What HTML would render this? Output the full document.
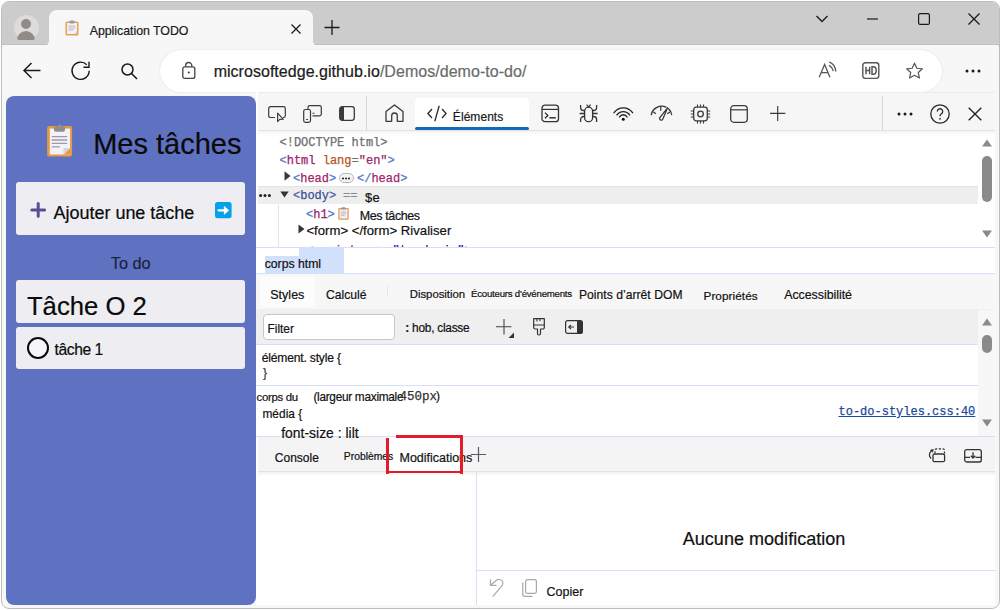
<!DOCTYPE html>
<html><head><meta charset="utf-8">
<style>
*{box-sizing:border-box;margin:0;padding:0}
html,body{width:1000px;height:610px;overflow:hidden;background:#ffffff;font-family:"Liberation Sans",sans-serif;color:#000}
.a{position:absolute}
svg{position:absolute;overflow:visible}
.t{position:absolute;white-space:nowrap;line-height:1;-webkit-text-stroke:0.2px currentColor}
#win{position:absolute;left:1px;top:1px;width:999px;height:608px;border:1px solid #bdbdbd;border-radius:8px;background:#f7f7f7;overflow:hidden}
</style></head><body>
<div id="win">
  <!-- tab strip -->
  <div class="a" style="left:0;top:0;width:998px;height:43.5px;background:#cccccc"></div>
</div>
<!-- active tab -->
<div class="a" style="left:2px;top:44.3px;width:996px;height:1.2px;background:#c0c0c0"></div>
<div class="a" style="left:49px;top:10px;width:264px;height:36px;background:#f7f7f7;border-radius:8px 8px 0 0"></div>
<div class="a" style="left:43px;top:40.5px;width:6px;height:6px;background:radial-gradient(circle at 0 0, transparent 5.5px, #f7f7f7 6px)"></div>
<div class="a" style="left:313px;top:40.5px;width:6px;height:6px;background:radial-gradient(circle at 100% 0, transparent 5.5px, #f7f7f7 6px)"></div>
<!-- toolbar -->
<div class="a" style="left:2px;top:45px;width:996px;height:47px;background:#f7f7f7"></div>
<!-- address bar -->
<div class="a" style="left:159.5px;top:50px;width:782.5px;height:41.5px;background:#ffffff;border-radius:21px;box-shadow:0 0 2px rgba(0,0,0,0.13)"></div>
<div class="t" style="left:213.63px;top:64.00px;font-size:16.00px;letter-spacing:0.036px;color:#1a1a1a">microsoftedge.github.io<span style="color:#6b6b6b">/Demos/demo-to-do/</span></div>
<div class="t" style="left:89.68px;top:25.00px;font-size:12.38px;letter-spacing:-0.033px;color:#1a1a1a">Application TODO</div>


<!-- avatar -->
<div class="a" style="left:14px;top:15px;width:25px;height:25px;border-radius:50%;background:#dedcda"></div>
<div class="a" style="left:21px;top:19px;width:10px;height:10px;border-radius:50%;background:#8f8b88"></div>
<div class="a" style="left:17px;top:31px;width:18px;height:9px;border-radius:9px 9px 3px 3px;background:#8f8b88;clip-path:ellipse(50% 100% at 50% 100%)"></div>
<!-- tab favicon -->
<svg style="left:65px;top:20px" width="14" height="16" viewBox="0 0 14 16">
 <rect x="0.5" y="1.5" width="13" height="14" rx="1.5" fill="#e8a04c"/>
 <rect x="2" y="3" width="10" height="11" fill="#f4f1f8"/>
 <path d="M9 14 L12 11 L12 14 Z" fill="#d8d2e0"/>
 <rect x="4.5" y="0.5" width="5" height="3" rx="1" fill="#9a9a9a"/>
 <path d="M3.5 6h7M3.5 8h7M3.5 10h5" stroke="#a8a8b8" stroke-width="0.8"/>
</svg>
<!-- tab close -->
<svg style="left:291px;top:24px" width="10" height="10" viewBox="0 0 10 10"><path d="M0.5 0.5L9.5 9.5M9.5 0.5L0.5 9.5" stroke="#1a1a1a" stroke-width="1.3"/></svg>
<!-- new tab plus -->
<svg style="left:324px;top:20px" width="16" height="16" viewBox="0 0 16 16"><path d="M8 0V15M0.5 7.5H15.5" stroke="#1a1a1a" stroke-width="1.3"/></svg>
<!-- window controls -->
<svg style="left:816px;top:15px" width="12" height="8" viewBox="0 0 12 8"><path d="M0.5 1L6 6.5L11.5 1" stroke="#1a1a1a" stroke-width="1.3" fill="none"/></svg>
<svg style="left:867px;top:18px" width="12" height="2" viewBox="0 0 12 2"><path d="M0 1H11" stroke="#1a1a1a" stroke-width="1.2"/></svg>
<svg style="left:918px;top:13px" width="12" height="12" viewBox="0 0 12 12"><rect x="0.6" y="0.6" width="10.8" height="10.8" rx="1.5" stroke="#1a1a1a" stroke-width="1.2" fill="none"/></svg>
<svg style="left:968px;top:13px" width="12" height="12" viewBox="0 0 12 12"><path d="M0.5 0.5L11.5 11.5M11.5 0.5L0.5 11.5" stroke="#1a1a1a" stroke-width="1.3"/></svg>
<!-- nav icons -->
<svg style="left:23px;top:62px" width="18" height="17" viewBox="0 0 18 17"><path d="M17.5 8.5H1.2M8.5 1L1 8.5L8.5 16" stroke="#1a1a1a" stroke-width="1.5" fill="none"/></svg>
<svg style="left:71px;top:61px" width="20" height="20" viewBox="0 0 20 20"><path d="M18.2 9.8A8.6 8.6 0 1 1 15.7 3.7" stroke="#1a1a1a" stroke-width="1.4" fill="none"/><path d="M12.5 6.3H18V0.8" stroke="#1a1a1a" stroke-width="1.4" fill="none"/></svg>
<svg style="left:121px;top:63px" width="17" height="17" viewBox="0 0 17 17"><circle cx="6.5" cy="6.5" r="5.5" stroke="#1a1a1a" stroke-width="1.5" fill="none"/><path d="M10.5 10.5L16 16" stroke="#1a1a1a" stroke-width="1.6"/></svg>
<!-- lock -->
<svg style="left:182px;top:62px" width="14" height="18" viewBox="0 0 14 18"><path d="M3.6 4.8V3.6A3.1 3.1 0 0 1 9.8 3.6V4.8" stroke="#444" stroke-width="1.3" fill="none"/><rect x="0.8" y="4.8" width="12" height="11.6" rx="2" stroke="#444" stroke-width="1.3" fill="none"/><circle cx="6.8" cy="10.6" r="1" fill="#333"/></svg>
<!-- right toolbar icons -->
<svg style="left:818px;top:61px" width="20" height="18" viewBox="0 0 20 18"><path d="M1.2 16.2L6.6 3.4L11.9 16.2M3.2 11.6H10" stroke="#555" stroke-width="1.25" fill="none"/><path d="M11.6 1.2Q16.8 3.2 17.8 10M11.3 4.6Q14.3 6 15.1 9.6" stroke="#555" stroke-width="1.25" fill="none" stroke-linecap="round"/></svg>
<svg style="left:862px;top:62px" width="18" height="17" viewBox="0 0 18 17"><rect x="0.8" y="0.8" width="16" height="15.6" rx="2.6" stroke="#555" stroke-width="1.4" fill="none"/><path d="M4 4.8V12.2M7.6 4.8V12.2M4 8.4H7.6M10 4.8V12.2H11.4A2.8 3.7 0 0 0 11.4 4.8Z" stroke="#555" stroke-width="1.5" fill="none"/></svg>
<svg style="left:905px;top:62px" width="19" height="18" viewBox="0 0 19 19"><path d="M9.5 1.2L12 6.6L17.8 7.2L13.5 11.1L14.7 16.9L9.5 14L4.3 16.9L5.5 11.1L1.2 7.2L7 6.6Z" stroke="#555" stroke-width="1.3" fill="none" stroke-linejoin="round"/></svg>
<svg style="left:965px;top:69px" width="16" height="4" viewBox="0 0 16 4"><circle cx="2" cy="2" r="1.5" fill="#1a1a1a"/><circle cx="8" cy="2" r="1.5" fill="#1a1a1a"/><circle cx="14" cy="2" r="1.5" fill="#1a1a1a"/></svg>

<!-- page -->
<div class="a" style="left:6px;top:96px;width:250px;height:509px;background:#5f72c1;border-radius:8px"></div>


<!-- todo content -->
<svg style="left:46px;top:124px" width="27" height="33" viewBox="0 0 27 33">
 <rect x="1.1" y="1.9" width="25" height="30.6" rx="2" fill="#e59a40"/>
 <rect x="3.8" y="4.6" width="20.3" height="25.9" fill="#f4f1f8"/>
 <path d="M17.5 30.5L24.1 23.9V30.5Z" fill="#e59a40"/>
 <path d="M17.5 30.5V23.9H24.1Z" fill="#d5d0e3"/>
 <rect x="8" y="2.2" width="11" height="5.6" rx="1.8" fill="#8e8e8e"/>
 <circle cx="13.5" cy="2" r="1.7" fill="#8e8e8e"/><circle cx="13.5" cy="2.2" r="0.7" fill="#e59a40"/>
 <path d="M5.7 12.7H21.2M5.7 16H21.2M5.7 19.3H21.2M5.7 22.9H13.8" stroke="#9c9ca4" stroke-width="1.3"/>
</svg>
<div class="t" style="left:93.2px;top:130px;font-size:29px;letter-spacing:0;color:#0a0a0a">Mes tâches</div>
<div class="a" style="left:16px;top:182px;width:229px;height:53px;background:#eeeef2;border-radius:3px"></div>
<svg style="left:30px;top:202px" width="17" height="16" viewBox="0 0 17 16"><path d="M8.2 1.5V14.3M1.8 8H14.6" stroke="#5b4c94" stroke-width="3" stroke-linecap="round"/></svg>
<div class="t" style="left:53.62px;top:204.00px;font-size:18.00px;letter-spacing:-0.030px;color:#0a0a0a">Ajouter une tâche</div>
<svg style="left:215.3px;top:201.5px" width="17" height="17" viewBox="0 0 17 17"><rect x="0" y="0" width="16.6" height="16.3" rx="2.5" fill="#06a0e9"/><path d="M3.6 8.3H10" stroke="#fff" stroke-width="2.3" stroke-linecap="round"/><path d="M9.3 4.4L13.6 8.3L9.3 12.2Z" fill="#fff" stroke="#fff" stroke-width="0.8" stroke-linejoin="round"/></svg>
<div class="t" style="left:110.74px;top:255.00px;font-size:16.32px;letter-spacing:0.005px;color:#1c2340">To do</div>
<div class="a" style="left:16px;top:280px;width:229px;height:43px;background:#eeeef2;border-radius:3px"></div>
<div class="t" style="left:26.95px;top:294px;font-size:25.70px;letter-spacing:-0.015px;color:#0a0a0a">Tâche O 2</div>
<div class="a" style="left:16px;top:326.5px;width:229px;height:42.5px;background:#eeeef2;border-radius:3px"></div>
<div class="a" style="left:26.5px;top:336.8px;width:22.5px;height:22.5px;border-radius:50%;border:2.7px solid #0a0a0a;background:#f6f6f9"></div>
<div class="t" style="left:54.43px;top:342.00px;font-size:15.65px;letter-spacing:-0.35px;color:#0a0a0a">tâche<span style="position:absolute;left:40.2px;top:0;letter-spacing:0">1</span></div>

<!-- devtools -->
<div class="a" style="left:256px;top:92px;width:739px;height:513px;background:#ffffff"></div>
<!-- dt toolbar -->
<div class="a" style="left:258px;top:92px;width:737px;height:38px;background:#f6f6f6;border-top:1px solid #ebebeb"></div>
<div class="a" style="left:258px;top:130px;width:737px;height:1px;background:#e3e3e3"></div>
<div class="a" style="left:258px;top:131px;width:737px;height:4px;background:linear-gradient(#f3f3f3,#ffffff)"></div>
<!-- inspect -->
<svg style="left:268px;top:106px" width="19" height="16" viewBox="0 0 19 16"><path d="M7 11.5H2.5A1.8 1.8 0 0 1 0.7 9.7V2.5A1.8 1.8 0 0 1 2.5 0.7H15.5A1.8 1.8 0 0 1 17.3 2.5V9.7A1.8 1.8 0 0 1 15.5 11.5H15" stroke="#3a3a3a" stroke-width="1.2" fill="none"/><path d="M9.6 7.2L9.6 15.6L11.7 13.4L15.4 13.3Z" stroke="#3a3a3a" stroke-width="1.15" fill="#f6f6f6" stroke-linejoin="round"/></svg>
<!-- device -->
<svg style="left:303px;top:105px" width="19" height="18" viewBox="0 0 19 18"><path d="M5 4V2.5A1.8 1.8 0 0 1 6.8 0.7H16.5A1.8 1.8 0 0 1 18.3 2.5V9A1.8 1.8 0 0 1 16.5 10.8H9.5" stroke="#3a3a3a" stroke-width="1.2" fill="none"/><rect x="0.7" y="4.5" width="6.8" height="12.8" rx="1.8" stroke="#3a3a3a" stroke-width="1.2" fill="none"/><path d="M3.2 14.5H5M9.5 8.2H11.5" stroke="#3a3a3a" stroke-width="1.1"/></svg>
<!-- dock -->
<svg style="left:339px;top:106px" width="16" height="15" viewBox="0 0 16 15"><rect x="0.7" y="0.7" width="14.6" height="13.6" rx="2.5" stroke="#3a3a3a" stroke-width="1.3" fill="none"/><rect x="1" y="1" width="4" height="13" fill="#3a3a3a"/></svg>
<div class="a" style="left:366px;top:96px;width:1px;height:34px;background:#d6d6d6"></div>
<!-- home -->
<svg style="left:385px;top:104px" width="19" height="18" viewBox="0 0 19 18"><path d="M1 17.3V7.6L9.5 0.9L18 7.6V17.3H12.3V11.8A2.8 2.8 0 0 0 6.7 11.8V17.3Z" stroke="#3a3a3a" stroke-width="1.3" fill="none" stroke-linejoin="round"/></svg>
<!-- elements tab -->
<div class="a" style="left:415px;top:98px;width:114px;height:32px;background:#ffffff;border-radius:4px 4px 0 0"></div>
<div class="a" style="left:415px;top:126.5px;width:114px;height:3px;background:#0f6cbd;border-radius:2px"></div>
<svg style="left:427px;top:105px" width="20" height="17" viewBox="0 0 20 17"><path d="M5 4L0.9 8.5L5 13M15 4L19.1 8.5L15 13M12.2 0.8L7.8 16.2" stroke="#2a2a2a" stroke-width="1.3" fill="none"/></svg>
<div class="t" style="left:452.86px;top:111.00px;font-size:12.00px;letter-spacing:0.054px;color:#1a1a1a">Éléments</div>
<!-- console -->
<svg style="left:541px;top:104px" width="19" height="19" viewBox="0 0 19 19"><rect x="1" y="1.2" width="16.5" height="16.5" rx="3" stroke="#333" stroke-width="1.3" fill="none"/><path d="M1 5.4H17.5" stroke="#333" stroke-width="1.2"/><path d="M4 8.6L6.8 11.4L4 14.2" stroke="#222" stroke-width="1.3" fill="none"/><path d="M8.3 13.8H14.8" stroke="#333" stroke-width="1.5"/></svg>
<!-- bug -->
<svg style="left:578px;top:103px" width="22" height="21" viewBox="0 0 22 21"><rect x="6.6" y="4.2" width="8" height="14.5" rx="4" stroke="#333" stroke-width="1.3" fill="none"/><path d="M8.6 1.6L10.6 3.8L12.6 1.6" stroke="#333" stroke-width="1.2" fill="none"/><path d="M2.6 2V4.5A3 3 0 0 0 5.6 7.5H6.6M1.6 10.5H6.6M6.6 13.5H5.6A3 3 0 0 0 2.6 16.5V19M18.6 2V4.5A3 3 0 0 1 15.6 7.5H14.6M19.6 10.5H14.6M14.6 13.5H15.6A3 3 0 0 1 18.6 16.5V19" stroke="#333" stroke-width="1.3" fill="none"/></svg>
<!-- wifi -->
<svg style="left:611px;top:103px" width="25" height="21" viewBox="0 0 25 21"><path d="M3.04 9.72A11.3 11.3 0 0 1 21.56 9.72 M6.00 11.95A7.6 7.6 0 0 1 18.60 11.95 M8.49 14.00A4.4 4.4 0 0 1 16.11 14.00" stroke="#222" stroke-width="1.4" fill="none" stroke-linecap="round"/><circle cx="12.3" cy="16.3" r="1.5" fill="#111"/></svg>
<!-- gauge -->
<svg style="left:649px;top:102px" width="26" height="22" viewBox="0 0 26 22"><path d="M2.3 12.5A10.6 10.6 0 0 1 17 5.2M19.6 6.8A10.6 10.6 0 0 1 22.6 12.5" stroke="#333" stroke-width="1.3" fill="none" stroke-linecap="round"/><path d="M11.8 5V8.3M4.7 10.2L6.5 11.5M18.6 11.5L20.6 10.2" stroke="#333" stroke-width="1.2" stroke-linecap="round"/><path d="M18.6 5.8L10.6 15.8A1.8 1.8 0 0 0 13.6 17.6Z" stroke="#333" stroke-width="1.2" fill="none" stroke-linejoin="round"/></svg>
<!-- chip -->
<svg style="left:690px;top:103.7px" width="21" height="20" viewBox="0 0 21 20"><rect x="3.7" y="3.2" width="13.6" height="13.6" rx="2.5" stroke="#3a3a3a" stroke-width="1.3" fill="none"/><circle cx="10.5" cy="10" r="2.8" stroke="#3a3a3a" stroke-width="1.3" fill="none"/><path d="M7.5 0.5V3M10.5 0.5V3M13.5 0.5V3M7.5 17V19.5M10.5 17V19.5M13.5 17V19.5M0.8 7H3.5M0.8 10H3.5M0.8 13H3.5M17.5 7H20.2M17.5 10H20.2M17.5 13H20.2" stroke="#3a3a3a" stroke-width="1.1"/></svg>
<!-- window -->
<svg style="left:729.5px;top:104.5px" width="18" height="18" viewBox="0 0 18 18"><rect x="0.7" y="0.7" width="16.6" height="16.6" rx="3.2" stroke="#3a3a3a" stroke-width="1.3" fill="none"/><path d="M0.7 4.8H17.3" stroke="#3a3a3a" stroke-width="1.2"/></svg>
<!-- plus -->
<svg style="left:769.5px;top:106px" width="16" height="15" viewBox="0 0 16 15"><path d="M7.7 0V15M0 7.3H15.4" stroke="#3a3a3a" stroke-width="1.15"/></svg>
<div class="a" style="left:882px;top:96px;width:1px;height:34px;background:#d6d6d6"></div>
<svg style="left:897px;top:112px" width="16" height="4" viewBox="0 0 16 4"><circle cx="2" cy="2" r="1.5" fill="#1a1a1a"/><circle cx="8" cy="2" r="1.5" fill="#1a1a1a"/><circle cx="14" cy="2" r="1.5" fill="#1a1a1a"/></svg>
<svg style="left:930px;top:104px" width="20" height="20" viewBox="0 0 20 20"><circle cx="10" cy="10" r="9.2" stroke="#2a2a2a" stroke-width="1.3" fill="none"/><path d="M7.3 7.5A2.7 2.7 0 1 1 11.4 9.8C10.4 10.4 10 11 10 12.3" stroke="#2a2a2a" stroke-width="1.3" fill="none"/><circle cx="10" cy="14.8" r="0.9" fill="#2a2a2a"/></svg>
<svg style="left:968px;top:107px" width="14" height="14" viewBox="0 0 14 14"><path d="M0.7 0.7L13.3 13.3M13.3 0.7L0.7 13.3" stroke="#1a1a1a" stroke-width="1.3"/></svg>


<!-- elements DOM tree -->
<div class="a" style="left:257.5px;top:186px;width:720px;height:18px;background:#eeeeee;border-top:1px solid #e4e4e4"></div>
<div class="a" style="left:278px;top:205px;width:1px;height:42px;background:#dde6f5"></div>
<style>
.m{position:absolute;white-space:nowrap;font-family:"Liberation Mono",monospace;font-size:12px;line-height:1;-webkit-text-stroke:0.25px currentColor}
.tg{color:#a1226b}.br{color:#4a78d0}.an{color:#b3561e}.av{color:#a1226b}.gy{color:#6e6e6e}
</style>
<div class="m gy" style="left:279.5px;top:137px">&lt;!DOCTYPE html&gt;</div>
<div class="m" style="left:279.5px;top:155px"><span class="br">&lt;</span><span class="tg">html</span> <span class="an">lang</span><span class="gy">=</span><span class="av">"en"</span><span class="br">&gt;</span></div>
<svg style="left:284px;top:171px" width="7" height="10" viewBox="0 0 7 10"><path d="M0.5 0.3L6.6 5L0.5 9.7Z" fill="#3a3a3a"/></svg>
<div class="m" style="left:293px;top:172.5px"><span class="br">&lt;</span><span class="tg">head</span><span class="br">&gt;</span></div>
<div class="a" style="left:338.5px;top:172.5px;width:15px;height:10px;border-radius:5px;border:1px solid #b8b8b8;background:#f3f3f3"></div>
<svg style="left:341px;top:176.5px" width="10" height="3" viewBox="0 0 10 3"><circle cx="2" cy="1.5" r="1" fill="#222"/><circle cx="5" cy="1.5" r="1" fill="#222"/><circle cx="8" cy="1.5" r="1" fill="#222"/></svg>
<div class="m" style="left:357px;top:172.5px"><span class="br">&lt;/</span><span class="tg">head</span><span class="br">&gt;</span></div>
<svg style="left:259px;top:193.5px" width="12" height="3" viewBox="0 0 12 3"><circle cx="1.6" cy="1.5" r="1.5" fill="#222"/><circle cx="6" cy="1.5" r="1.5" fill="#222"/><circle cx="10.4" cy="1.5" r="1.5" fill="#222"/></svg>
<svg style="left:279.5px;top:191px" width="9" height="7" viewBox="0 0 9 7"><path d="M0.3 0.5H8.7L4.5 6.5Z" fill="#333"/></svg>
<div class="m" style="left:293px;top:190px"><span class="br" style="color:#4a62a8">&lt;</span><span style="color:#3b4f95">body</span><span class="br" style="color:#4a62a8">&gt;</span></div>
<div class="m gy" style="left:343px;top:190px;color:#8a8a8a">==</div>
<div class="t" style="left:364.96px;top:192.00px;font-size:12.96px;letter-spacing:0.322px;color:#111">$e</div>
<div class="m" style="left:306px;top:209px"><span class="br">&lt;</span><span class="tg">h1</span><span class="br">&gt;</span></div>
<svg style="left:338px;top:206.5px" width="11" height="13" viewBox="0 0 11 13"><rect x="0.3" y="1" width="10.4" height="11.8" rx="1" fill="#e39a45"/><rect x="1.5" y="2.3" width="8" height="9.2" fill="#f3eff8"/><rect x="3.5" y="0.3" width="4" height="2.3" rx="0.8" fill="#999"/><path d="M2.8 5H8.2M2.8 6.8H8.2M2.8 8.6H6.5" stroke="#a0a0aa" stroke-width="0.7"/></svg>
<div class="t" style="left:359.75px;top:210.00px;font-size:12.48px;letter-spacing:-0.378px;color:#111">Mes tâches</div>
<svg style="left:297.5px;top:224px" width="7" height="10" viewBox="0 0 7 10"><path d="M0.5 0.5L6.5 5L0.5 9.5Z" fill="#333"/></svg>
<div class="t" style="left:306.40px;top:224.00px;font-size:13.13px;letter-spacing:0.021px;color:#111">&lt;form&gt; &lt;/form&gt; Rivaliser</div>
<div class="m" style="left:306px;top:245px;height:2px;overflow:hidden"><span class="br">&lt;</span><span class="tg">script</span> <span class="an">src</span><span class="gy">=</span><span class="av" style="color:#1a1aa6">"to-do.js"</span><span class="br">&gt;</span></div>
<!-- elements scrollbar -->
<svg style="left:982px;top:139px" width="10" height="8" viewBox="0 0 10 8"><path d="M0 7.5L5 0.5L10 7.5Z" fill="#8a8a8a"/></svg>
<div class="a" style="left:982px;top:156px;width:10px;height:46px;border-radius:5px;background:#8a8a8a"></div>
<svg style="left:982px;top:230px" width="10" height="8" viewBox="0 0 10 8"><path d="M0 0.5L5 7.5L10 0.5Z" fill="#8a8a8a"/></svg>
<div class="a" style="left:256px;top:247px;width:739px;height:1px;background:#d3e0f6"></div>
<!-- breadcrumb -->
<div class="a" style="left:299px;top:248px;width:45px;height:24.5px;background:#d1e1fb"></div>
<div class="a" style="left:265px;top:256px;width:34px;height:16.5px;background:#d1e1fb"></div>
<div class="t" style="left:264.67px;top:258.00px;font-size:12.24px;letter-spacing:-0.006px;color:#111">corps html</div>
<div class="a" style="left:256px;top:273px;width:739px;height:1px;background:#d3e0f6"></div>


<!-- styles tabs -->
<div class="a" style="left:256px;top:274px;width:739px;height:35px;background:#f7f7f7"></div>
<div class="a" style="left:260px;top:276px;width:55px;height:31px;background:#fcfcfc;border-radius:3px"></div>
<div class="t" style="left:270.22px;top:289.00px;font-size:12.50px;letter-spacing:0.022px;color:#111">Styles</div>
<div class="t" style="left:326.01px;top:289.00px;font-size:12.12px;letter-spacing:0.033px;color:#111">Calculé</div>
<div class="a" style="left:387px;top:286px;width:1px;height:11px;background:#e8e8e8"></div>
<div class="t" style="left:409.70px;top:289.00px;font-size:11.38px;letter-spacing:-0.016px;color:#111">Disposition</div>
<div class="t" style="left:471px;top:289px;font-size:9.6px;letter-spacing:-0.2px;color:#111">Écouteurs d'événements</div>
<div class="t" style="left:578.95px;top:289.00px;font-size:12.12px;letter-spacing:0.034px;color:#111">Points d’arrêt DOM</div>
<div class="t" style="left:703.47px;top:290.00px;font-size:11.75px;letter-spacing:0.073px;color:#111">Propriétés</div>
<div class="t" style="left:784.18px;top:289.00px;font-size:12.38px;letter-spacing:-0.025px;color:#111">Accessibilité</div>
<!-- filter toolbar -->
<div class="a" style="left:256px;top:309px;width:739px;height:35px;background:#efefef"></div>
<div class="a" style="left:262.5px;top:314px;width:132px;height:25.5px;background:#ffffff;border:1px solid #c6c6c6;border-radius:4px"></div>
<div class="t" style="left:267.57px;top:324.00px;font-size:11.88px;letter-spacing:-0.008px;color:#111">Filter</div>
<div class="t" style="left:405.30px;top:323.00px;font-size:11.88px;letter-spacing:-0.248px;color:#111"><b>:</b> hob, classe</div>
<svg style="left:495.5px;top:319px" width="19" height="20" viewBox="0 0 19 20"><path d="M8 0V15.5M0 7.7H15.5" stroke="#444" stroke-width="1.1"/><path d="M12.5 19H18V13.5Z" fill="#333"/></svg>
<svg style="left:532.5px;top:318px" width="12" height="18" viewBox="0 0 12 18"><path d="M0.7 0.7H11.3V9.5A1.5 1.5 0 0 1 9.8 11H7.5V15.5A1.5 1.5 0 0 1 4.5 15.5V11H2.2A1.5 1.5 0 0 1 0.7 9.5Z" stroke="#333" stroke-width="1.2" fill="none" stroke-linejoin="round"/><path d="M0.7 7H11.3M4 0.7V3.5M7 0.7V3" stroke="#333" stroke-width="1.1"/></svg>
<svg style="left:565px;top:320px" width="18" height="14" viewBox="0 0 18 14"><rect x="0.6" y="0.6" width="16.8" height="12.8" rx="2" stroke="#333" stroke-width="1.2" fill="none"/><rect x="12" y="1" width="5" height="12" fill="#333"/><path d="M3.8 7H9M6 4.8L3.8 7L6 9.2" stroke="#333" stroke-width="1.2" fill="none"/></svg>
<div class="a" style="left:256px;top:344px;width:722px;height:1px;background:#d3e0f6"></div>
<!-- rules -->
<div class="t" style="left:261.68px;top:352.00px;font-size:12.12px;letter-spacing:-0.186px;color:#111">élément. style {</div>
<div class="t" style="left:263px;top:367px;font-size:12px;color:#333">}</div>
<div class="a" style="left:256px;top:385px;width:722px;height:1px;background:#d3e0f6"></div>
<div class="t" style="left:256.57px;top:392.00px;font-size:11.38px;letter-spacing:-0.316px;color:#111">corps du</div>
<div class="t" style="left:313.40px;top:392.00px;font-size:11.85px;letter-spacing:-0.291px;color:#111">(largeur maximale</div>
<div class="m" style="left:399.5px;top:391px;font-size:12.5px;color:#333">450px</div>
<div class="t" style="left:436px;top:390px;font-size:12px;color:#111">)</div>
<div class="t" style="left:262.38px;top:409.00px;font-size:11.88px;letter-spacing:0.050px;color:#111">média {</div>
<div class="t" style="left:281.15px;top:427px;z-index:5;font-size:13.91px;letter-spacing:0.019px;color:#111">font-size : lilt</div>
<div class="m" style="left:838.5px;top:406px;color:#1a4a9c;text-decoration:underline">to-do-styles.css:40</div>
<!-- styles scrollbar -->
<div class="a" style="left:978px;top:310px;width:18px;height:127px;background:#f7f7f7"></div>
<svg style="left:982px;top:318px" width="10" height="8" viewBox="0 0 10 8"><path d="M0 7.5L5 0.5L10 7.5Z" fill="#8a8a8a"/></svg>
<div class="a" style="left:982px;top:335px;width:10px;height:18px;border-radius:5px;background:#8a8a8a"></div>
<svg style="left:982px;top:419px" width="10" height="8" viewBox="0 0 10 8"><path d="M0 0.5L5 7.5L10 0.5Z" fill="#8a8a8a"/></svg>
<div class="a" style="left:256px;top:436px;width:739px;height:1px;background:#d3e0f6"></div>
<!-- drawer tabs -->
<div class="a" style="left:258px;top:437px;width:737px;height:35px;background:#f4f4f4;border-bottom:1px solid #e2e2e2"></div>
<div class="a" style="left:258px;top:472px;width:737px;height:4px;background:linear-gradient(#f1f1f1,#ffffff)"></div>
<div class="a" style="left:388px;top:437px;width:73px;height:35px;background:#ffffff"></div>
<div class="t" style="left:274.81px;top:452.00px;font-size:12.00px;letter-spacing:0.013px;color:#111">Console</div>
<div class="t" style="left:343.86px;top:452.00px;font-size:10.34px;letter-spacing:-0.003px;color:#111">Problèmes</div>
<div class="t" style="left:399.54px;top:452.00px;font-size:12.50px;letter-spacing:-0.014px;color:#111">Modifications</div>
<svg style="left:470.5px;top:447px" width="15" height="15" viewBox="0 0 15 15"><path d="M7.5 0V15M0 7.5H15" stroke="#5a5a5a" stroke-width="1.2"/></svg>
<div class="a" style="left:386px;top:438px;width:2.8px;height:35.5px;background:#e31b2a"></div>
<div class="a" style="left:396px;top:435px;width:66.7px;height:2.9px;background:#e31b2a"></div>
<div class="a" style="left:460px;top:435px;width:2.7px;height:38.5px;background:#e31b2a"></div>
<div class="a" style="left:386px;top:470.7px;width:76.7px;height:2.8px;background:#e31b2a"></div>
<svg style="left:929px;top:448px" width="17" height="15" viewBox="0 0 17 15"><path d="M2.5 3A4.6 4.6 0 0 0 2.2 10.5" stroke="#333" stroke-width="1.3" fill="none"/><path d="M1.3 2.2L4.3 1.3L3.6 4.2Z" fill="#333" stroke="#333" stroke-width="0.6"/><rect x="4" y="6" width="11.6" height="7.7" rx="1.5" stroke="#333" stroke-width="1.3" fill="none"/><path d="M6 5.5V2.3A1.5 1.5 0 0 1 7.5 0.8H14A1.5 1.5 0 0 1 15.5 2.3V5.5" stroke="#333" stroke-width="1.2" stroke-dasharray="2.2 1.6" fill="none"/></svg>
<svg style="left:964px;top:448.5px" width="19" height="14" viewBox="0 0 19 14"><rect x="0.7" y="0.7" width="16.6" height="12.3" rx="2" stroke="#333" stroke-width="1.3" fill="none"/><path d="M0.7 8.3H6M11.5 8.3H17.3M9 3.2V9M6.8 6.8L9 9L11.2 6.8" stroke="#333" stroke-width="1.3" fill="none"/></svg>
<!-- drawer content -->
<div class="a" style="left:476px;top:472px;width:1px;height:133px;background:#d3e0f6"></div>
<div class="a" style="left:477px;top:570px;width:519px;height:1px;background:#d3e0f6"></div>
<div class="t" style="left:682.72px;top:530.00px;font-size:18.03px;letter-spacing:0.024px;color:#111">Aucune modification</div>
<svg style="left:489px;top:579px" width="16" height="19" viewBox="0 0 16 19"><path d="M1.5 0.3V6.3H7.5" stroke="#a8a8a8" stroke-width="1.2" fill="none"/><path d="M1.8 6L7.2 1.5A3.9 3.9 0 0 1 12.6 7.2L3.8 17.6" stroke="#a8a8a8" stroke-width="1.2" fill="none"/></svg>
<svg style="left:522px;top:579px" width="15" height="18" viewBox="0 0 15 18"><rect x="3.6" y="0.6" width="10.8" height="13.8" rx="1.8" stroke="#a8a8a8" stroke-width="1.2" fill="none"/><path d="M0.8 3.5V15.2A2.2 2.2 0 0 0 3 17.4H10.5" stroke="#a8a8a8" stroke-width="1.2" fill="none"/></svg>
<div class="t" style="left:546.49px;top:586.00px;font-size:12.50px;letter-spacing:0.014px;color:#111">Copier</div>

</body></html>
